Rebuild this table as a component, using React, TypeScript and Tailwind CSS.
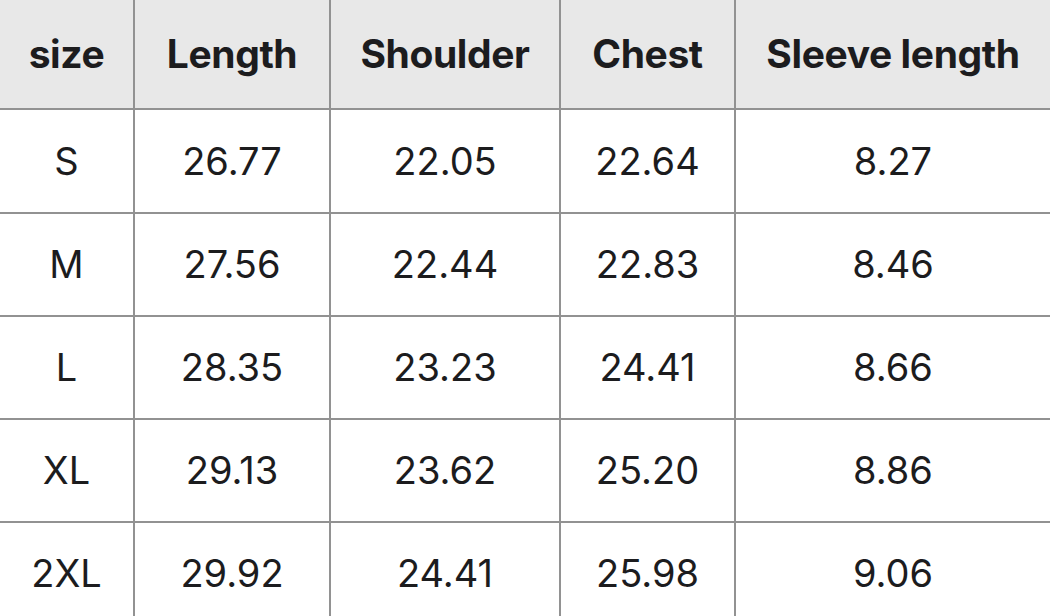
import React from 'react';

const HEADERS = ['size', 'Length', 'Shoulder', 'Chest', 'Sleeve length'];

const ROWS: string[][] = [
  ['S', '26.77', '22.05', '22.64', '8.27'],
  ['M', '27.56', '22.44', '22.83', '8.46'],
  ['L', '28.35', '23.23', '24.41', '8.66'],
  ['XL', '29.13', '23.62', '25.20', '8.86'],
  ['2XL', '29.92', '24.41', '25.98', '9.06'],
];

export default function App() {
  return (
    <div className="w-[1050px] h-[616px] overflow-hidden bg-white" style={{ fontFamily: 'Inter, "Liberation Sans", sans-serif' }}>
      <div className="grid grid-cols-[133px_194px_228px_173px_1fr] grid-rows-[108px_102px_101px_101px_101px_100px] gap-[2px] bg-[#929292]">
        {HEADERS.map((h) => (
          <div
            key={h}
            className="flex items-center justify-center bg-[#e8e8e8] text-[39px] font-bold tracking-[-0.01em] text-[#1c1c1e]"
          >
            {h}
          </div>
        ))}
        {ROWS.map((row) =>
          row.map((cell, i) => (
            <div
              key={row[0] + i}
              className="flex items-center justify-center bg-white text-[38px] text-[#1c1c1e]"
            >
              {cell}
            </div>
          ))
        )}
      </div>
    </div>
  );
}
